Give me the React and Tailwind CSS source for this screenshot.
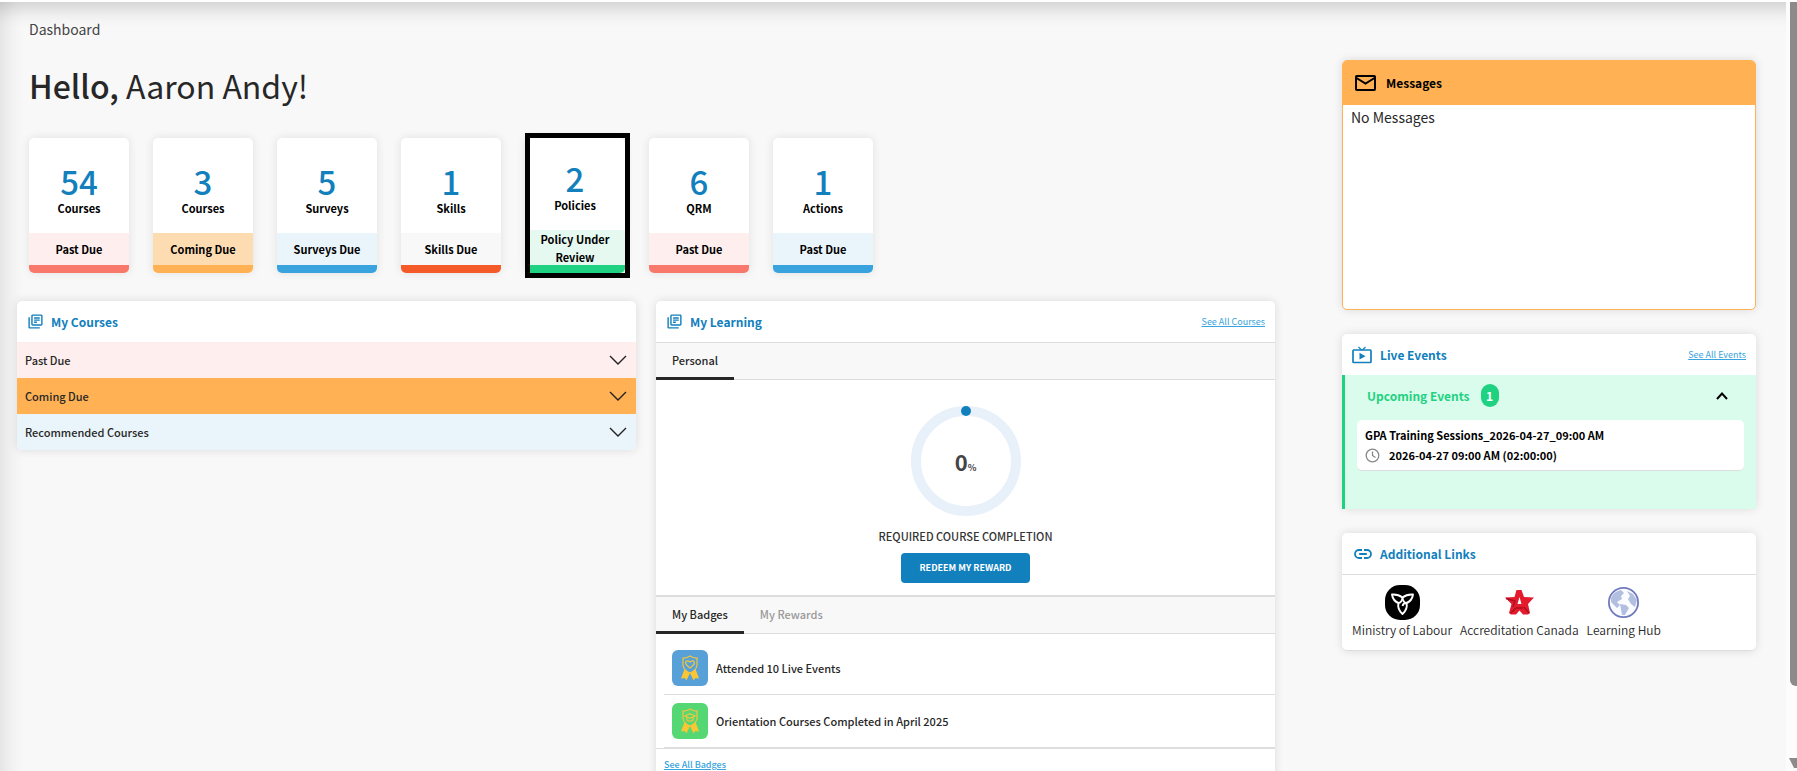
import { MdOutlineLibraryBooks } from "react-icons/md";

const tiles = [
  { count: 54, label: "Courses", due: "Past Due", tint: "bg-[#feefee]", bar: "bg-[#f9786c]" },
  { count: 3, label: "Courses", due: "Coming Due", tint: "bg-[#fedcb1]", bar: "bg-[#ffb154]" },
  { count: 5, label: "Surveys", due: "Surveys Due", tint: "bg-[#eaf5fb]", bar: "bg-[#38a3dd]" },
  { count: 1, label: "Skills", due: "Skills Due", tint: "bg-[#f8f8f8]", bar: "bg-[#f45b29]" },
  { count: 2, label: "Policies", due: "Policy Under Review", tint: "bg-[#e6f9f0]", bar: "bg-[#1fd281]", selected: true },
  { count: 6, label: "QRM", due: "Past Due", tint: "bg-[#feefee]", bar: "bg-[#f9786c]" },
  { count: 1, label: "Actions", due: "Past Due", tint: "bg-[#eaf5fb]", bar: "bg-[#38a3dd]" },
];

const courseGroups = [
  { name: "Past Due", tint: "bg-[#feefee]" },
  { name: "Coming Due", tint: "bg-[#ffb154]" },
  { name: "Recommended Courses", tint: "bg-[#eaf5fb]" },
];

const badges = [
  { name: "Attended 10 Live Events", tint: "bg-[#58a1d8]", kind: "heart" },
  { name: "Orientation Courses Completed in April 2025", tint: "bg-[#55d873]", kind: "cap" },
];

function LiveTvIcon() {
  return (
    <svg viewBox="0 0 20 18" className="h-[18px] w-5" fill="none" stroke="#1180bd">
      <rect x="1" y="4" width="18" height="12.5" rx="0.8" strokeWidth="1.7" />
      <path d="M6.5 1 L9.6 4 M13.5 1 L10.4 4" strokeWidth="1.1" />
      <path d="M7.5 6.8 L13.5 10.2 L7.5 13.6 Z" fill="#1180bd" stroke="none" />
    </svg>
  );
}

function LinkIcon() {
  return (
    <svg viewBox="0 0 18 10" className="h-[10px] w-[18px]" fill="none" stroke="#1180bd" strokeWidth="1.8">
      <path d="M8 1 H5 a4 4 0 0 0 0 8 H8 M10 1 H13 a4 4 0 0 1 0 8 H10 M5.2 5 H12.8" />
    </svg>
  );
}

function MailIcon() {
  return (
    <svg viewBox="0 0 21 16" className="h-4 w-[21px]" fill="none" stroke="#000" strokeWidth="2">
      <rect x="1" y="1" width="19" height="14" rx="0.8" />
      <path d="M1.5 3 L10.5 8.5 L19.5 3" />
    </svg>
  );
}

function ClockIcon() {
  return (
    <svg viewBox="0 0 15 15" className="size-[15px]" fill="none" stroke="#888" strokeWidth="1.3">
      <circle cx="7.5" cy="7.5" r="6.3" />
      <path d="M7.5 3.5 V7.5 L10.5 9.5" />
    </svg>
  );
}

function ChevronDown() {
  return (
    <svg viewBox="0 0 18 10" className="h-[10px] w-[18px]" fill="none" stroke="#222" strokeWidth="1.4">
      <path d="M1 1 L9 9 L17 1" />
    </svg>
  );
}

function RibbonIcon({ kind }) {
  return (
    <svg viewBox="0 0 36 36" className="size-9" fill="none" stroke="#f2c53d" strokeWidth="1.2">
      <path d="M12.5 19 L9 28.5 L12.5 28 L14.5 30.3 L18 23 L21.5 30.3 L23.5 28 L27 28.5 L23.5 19 Q18 24 12.5 19 Z" fill="#fbc633" stroke="none" />
      <path
        d="M18 6 Q14.5 8.3 11 8 V15.5 Q12 20.5 18 23 Q24 20.5 25 15.5 V8 Q21.5 8.3 18 6 Z"
        fill={kind === "heart" ? "#58a1d8" : "#55d873"}
      />
      {kind === "heart" ? (
        <path d="M18 18 Q13.3 14.8 13.6 12.3 Q14.4 9.5 18 12 Q21.6 9.5 22.4 12.3 Q22.7 14.8 18 18 Z" />
      ) : (
        <path d="M12.8 13 L18 10.6 L23.2 13 L18 15.4 Z M14.8 14.2 V17 Q18 19.5 21.2 17 V14.2" />
      )}
    </svg>
  );
}

function TrilliumIcon() {
  return (
    <svg viewBox="0 0 35 35" className="size-[35px]" fill="none" stroke="#fff" strokeWidth="1.9" strokeLinejoin="round">
      <rect width="35" height="35" rx="15" fill="#000" stroke="none" />
      <path d="M17.5 12.5 Q13 9 7 9.5 Q8 16 13.5 18 Q17 17.5 17.5 12.5 Z" />
      <path d="M17.5 12.5 Q22 9 28 9.5 Q27 16 21.5 18 Q18 17.5 17.5 12.5 Z" />
      <path d="M13.5 18 Q12 24 17.5 29 Q23 24 21.5 18 Q18.5 17.5 17.5 21" />
    </svg>
  );
}

function StarIcon() {
  return (
    <svg viewBox="0 0 35 35" className="size-[35px]">
      <path d="M14.5 5 H19.5 L22 12 L32 12.5 L26 19 L28 28 L26 29.5 H21 L17.5 25.5 L14 29.5 H9 L7 28 L9.5 19 L3 12.5 L12.5 12 Z" fill="#e31b2c" />
      <path d="M17.5 12 L19.5 19 H15.5 Z" fill="#fff" />
      <path d="M4 13.5 L13 16 L11 22 M27 28 L22 22 M9 28 L14 23 H21" stroke="#a80f20" strokeWidth="1.3" fill="none" />
    </svg>
  );
}

function GlobeIcon() {
  return (
    <svg viewBox="0 0 35 35" className="size-[35px]">
      <circle cx="17.5" cy="17.5" r="14.6" fill="#fbfcff" stroke="#7079bb" strokeWidth="1.8" />
      <path d="M5 13 Q8 6 15 5 L18 8 L15 11 L16 14 L11 17 L14 20 L11 23 L5 17 Z" fill="#b3bfe0" />
      <path d="M14 19 L20 20 L23 23 L19 30 L16 30 Z" fill="#b3bfe0" />
      <path d="M21 6 L27 9 L31 15 L29 22 L25 19 L22 14 L24 11 Z" fill="#b3bfe0" />
    </svg>
  );
}

const links = [
  { name: "Ministry of Labour", Icon: TrilliumIcon },
  { name: "Accreditation Canada", Icon: StarIcon },
  { name: "Learning Hub", Icon: GlobeIcon },
];

function StatTile({ tile }) {
  return (
    <div className="relative">
      <button
        type="button"
        className="flex h-[135px] w-[100px] flex-col overflow-hidden rounded-[5px] bg-white text-black shadow-[0_0_10px_rgba(0,0,0,0.1)]"
      >
        <span className="flex w-full flex-1 flex-col items-center justify-end pb-[15px]">
          <span className="text-[33px] leading-[34px] font-medium text-[#1180bd]">{tile.count}</span>
          <span className="text-[11px] leading-5 font-bold">{tile.label}</span>
        </span>
        <span
          className={`flex w-full items-center justify-center px-2 text-[11px] leading-[18px] font-bold ${
            tile.selected ? "h-[35px]" : "h-8"
          } ${tile.tint}`}
        >
          {tile.due}
        </span>
        <span className={`h-2 w-full ${tile.bar}`} />
      </button>
      {tile.selected && (
        <div className="pointer-events-none absolute -top-[5px] -right-[5px] -bottom-[5px] left-0 border-5 border-black" />
      )}
    </div>
  );
}

function Card({ className = "", children }) {
  return (
    <section className={`rounded-[5px] bg-white shadow-[0_0_10px_rgba(0,0,0,0.12)] ${className}`}>{children}</section>
  );
}

function App() {
  return (
    <div className="flex h-screen overflow-hidden border-t-2 border-white bg-[#f8f8f8] font-['Noto_Sans_CJK_SC',sans-serif] text-[#272727]">
      <div className="flex flex-1 items-start pr-[30px] pl-[17px] shadow-[inset_0_26px_20px_-20px_rgba(0,0,0,0.18),inset_26px_0_20px_-20px_rgba(0,0,0,0.1)]">
        <main className="min-w-0 flex-1">
          <div className="pl-3">
            <p className="pt-[15px] text-[14px] leading-6 text-[#444]">Dashboard</p>
            <h1 className="pt-[23px] text-[32px] leading-[42px]">
              <b className="font-medium">Hello,</b> Aaron Andy!
            </h1>
            <div className="flex gap-6 pt-8">
              {tiles.map((tile, i) => (
                <StatTile key={i} tile={tile} />
              ))}
            </div>
          </div>

          <div className="grid grid-cols-2 items-start gap-5 pt-7">
            <Card className="overflow-hidden">
              <h2 className="flex h-[41px] items-center gap-[7px] px-[10px] text-[12px] font-bold text-[#1180bd]">
                <MdOutlineLibraryBooks className="size-[17px]" />
                My Courses
              </h2>
              {courseGroups.map((group) => (
                <button
                  key={group.name}
                  type="button"
                  className={`flex h-9 w-full items-center justify-between px-2 pr-[9px] text-[11px] font-medium ${group.tint}`}
                >
                  {group.name}
                  <ChevronDown />
                </button>
              ))}
            </Card>

            <Card>
              <header className="flex h-[42px] items-center justify-between border-b border-[#ddd] px-[10px]">
                <h2 className="flex items-center gap-[7px] text-[12px] font-bold text-[#1180bd]">
                  <MdOutlineLibraryBooks className="size-[17px]" />
                  My Learning
                </h2>
                <a href="#courses" className="text-[9px] text-[#38a3dd] underline">See All Courses</a>
              </header>
              <div className="flex h-[37px] border-b border-[#ddd] bg-[#f8f8f8]">
                <button type="button" className="h-[37px] border-b-3 border-[#272727] px-4 text-[11px] font-medium">
                  Personal
                </button>
              </div>
              <div className="flex flex-col items-center pt-[26px] pb-3">
                <div className="relative flex size-[110px] items-center justify-center">
                  <svg viewBox="0 0 110 110" className="absolute inset-0 size-full" fill="none">
                    <circle cx="55" cy="55" r="50" stroke="#e8f0fa" strokeWidth="10" />
                    <circle cx="55" cy="5" r="5" fill="#1180bd" />
                  </svg>
                  <p className="relative text-[22px] font-bold text-[#444]">
                    0<span className="text-[9px]">%</span>
                  </p>
                </div>
                <p className="pt-2 text-[11px] leading-6 font-medium text-[#333]">REQUIRED COURSE COMPLETION</p>
                <button type="button" className="mt-[5px] h-[30px] rounded bg-[#1180bd] px-[18px] text-[9px] font-bold text-white">
                  REDEEM MY REWARD
                </button>
              </div>
              <div className="flex h-[39px] border-t-2 border-b border-[#ddd] bg-[#f8f8f8] text-[11px] font-medium">
                <button type="button" className="h-[37px] border-b-3 border-[#272727] px-4">My Badges</button>
                <button type="button" className="h-[37px] px-4 pb-[3px] text-[#999]">My Rewards</button>
              </div>
              <ul className="pt-2 pl-2">
                {badges.map((badge) => (
                  <li key={badge.name} className="flex h-[53px] items-center gap-2 border-b border-[#ddd] pl-2 text-[11px] font-medium">
                    <span className={`rounded-md ${badge.tint}`}>
                      <RibbonIcon kind={badge.kind} />
                    </span>
                    {badge.name}
                  </li>
                ))}
              </ul>
              <div className="flex border-t border-[#ddd] px-2 pt-2 pb-4">
                <a href="#badges" className="text-[9px] leading-4 font-medium text-[#38a3dd] underline">See All Badges</a>
              </div>
            </Card>
          </div>
        </main>

        <aside className="ml-[67px] flex w-[414px] shrink-0 flex-col gap-6 pt-[58px]">
          <Card className="min-h-[250px] overflow-hidden border border-[#ffb154]">
            <h2 className="flex h-11 items-center gap-[10px] bg-[#ffb154] px-3 text-[12px] font-bold text-black">
              <MailIcon />
              Messages
            </h2>
            <p className="px-2 text-[14px] leading-6">No Messages</p>
          </Card>

          <Card>
            <header className="flex h-[41px] items-center justify-between px-[10px]">
              <h2 className="flex items-center gap-2 text-[12px] font-bold text-[#1180bd]">
                <LiveTvIcon />
                Live Events
              </h2>
              <a href="#events" className="text-[9px] text-[#38a3dd] underline">See All Events</a>
            </header>
            <div className="border-l-3 border-[#1fd281] bg-[#dafcec] px-3 pb-[38px]">
              <button type="button" className="flex h-[45px] w-full items-center pr-4 pb-1 pl-[10px] text-[12px] font-bold text-[#1fd281]">
                Upcoming Events
                <span className="ml-[11px] flex h-[23px] w-[18px] items-center justify-center rounded-full bg-[#1fd281] text-white">
                  1
                </span>
                <svg viewBox="0 0 12 8" className="ml-auto h-2 w-3" fill="none" stroke="#000" strokeWidth="2">
                  <path d="M1 7 L6 1.5 L11 7" />
                </svg>
              </button>
              <div className="rounded-[5px] border-b border-[#ddd] bg-white px-2 py-[5px] text-[11px] leading-5 font-bold text-black">
                <p>GPA Training Sessions_2026-04-27_09:00 AM</p>
                <p className="flex items-center gap-[9px]">
                  <ClockIcon />
                  2026-04-27 09:00 AM (02:00:00)
                </p>
              </div>
            </div>
          </Card>

          <Card className="border-b border-[#ddd]">
            <h2 className="flex h-[42px] items-center gap-2 border-b border-[#ddd] px-3 text-[12px] font-bold text-[#1180bd]">
              <LinkIcon />
              Additional Links
            </h2>
            <div className="flex gap-2 px-[10px] pt-[10px] pb-[10px]">
              {links.map(({ name, Icon }) => (
                <a key={name} href="#links" className="flex flex-col items-center text-[12px] leading-5 font-[350]">
                  <Icon />
                  {name}
                </a>
              ))}
            </div>
          </Card>
        </aside>
      </div>

      <div className="flex w-[11px] flex-col items-end justify-between bg-[#fcfcfc]">
        <div className="h-[89%] w-[7px] rounded-bl-md bg-[#8b8b8b]" />
        <svg viewBox="0 0 8 10" className="mb-[3px] h-[10px] w-2" fill="#8b8b8b">
          <path d="M0 0 H8 V10 H5 Z" />
        </svg>
      </div>
    </div>
  );
}

export default App;
